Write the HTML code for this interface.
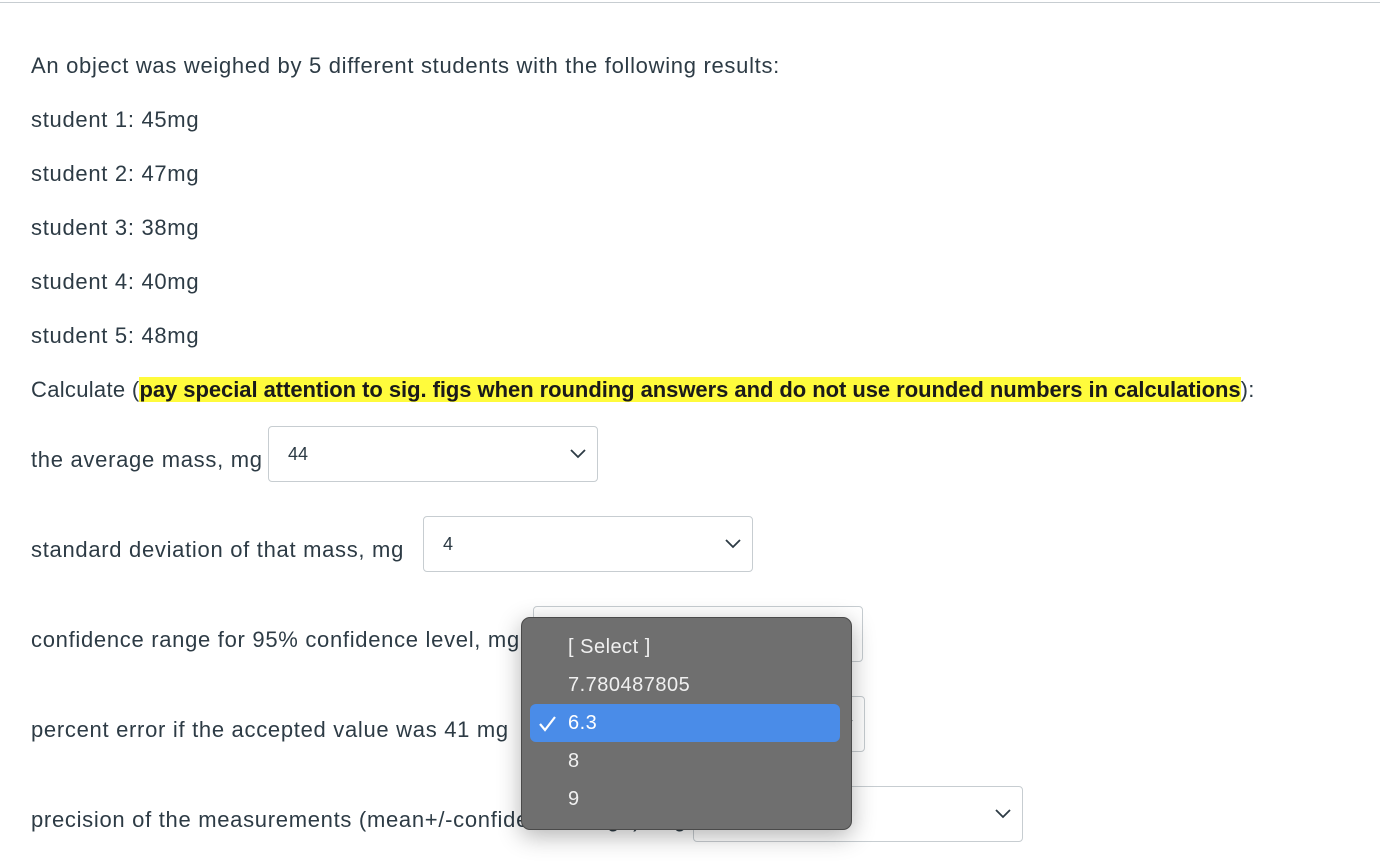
<!DOCTYPE html>
<html><head><style>
body{margin:0;width:1380px;height:868px;overflow:hidden;background:#fff;font-family:"Liberation Sans",sans-serif;color:#2d3b45;position:relative}
.top{position:absolute;left:0;top:2px;width:1380px;height:1px;background:#c7cdd1}
.t{position:absolute;left:31px;font-size:22px;letter-spacing:0.7px;white-space:nowrap;color:#2d3b45}
.hl{background:#fffb3c;font-weight:bold;color:#1a1a1a;letter-spacing:-0.05px}
.sel{position:absolute;width:328px;height:54px;border:1px solid #c7cdd1;border-radius:4px;background:#fff;font-size:18px;color:#2d3b45}
.sel span{position:absolute;left:19px;top:17px}
.sel svg{position:absolute;right:10px;top:21px}
.dd{position:absolute;left:521px;top:617px;width:329px;height:211px;background:#6f6f6f;border:1px solid #4a4a4a;border-radius:9px;box-shadow:0 6px 24px rgba(0,0,0,.3);color:#f0f0f0;font-size:20px;letter-spacing:0.5px}
.dd .it{position:absolute;left:46px}
.hi{position:absolute;left:8px;top:86px;width:310px;height:38px;background:#4a8ce8;border-radius:6px}
</style></head><body>
<div class="top"></div>
<div class="t" style="top:53px">An object was weighed by 5 different students with the following results:</div>
<div class="t" style="top:107px">student 1: 45mg</div>
<div class="t" style="top:161px">student 2: 47mg</div>
<div class="t" style="top:215px">student 3: 38mg</div>
<div class="t" style="top:269px">student 4: 40mg</div>
<div class="t" style="top:323px">student 5: 48mg</div>
<div class="t" style="top:377px;letter-spacing:0.3px">Calculate (<span class="hl">pay special attention to sig. figs when rounding answers and do not use rounded numbers in calculations</span>):</div>
<div class="t" style="top:447px">the average mass, mg</div>
<div class="sel" style="left:268px;top:426px"><span>44</span><svg width="18" height="12"><path d="M2 2l7 7 7-7" fill="none" stroke="#2d3b45" stroke-width="1.8"/></svg></div>
<div class="t" style="top:537px">standard deviation of that mass, mg</div>
<div class="sel" style="left:423px;top:516px"><span>4</span><svg width="18" height="12"><path d="M2 2l7 7 7-7" fill="none" stroke="#2d3b45" stroke-width="1.8"/></svg></div>
<div class="t" style="top:627px">confidence range for 95% confidence level, mg</div>
<div class="sel" style="left:533px;top:606px"><svg width="18" height="12"><path d="M2 2l7 7 7-7" fill="none" stroke="#2d3b45" stroke-width="1.8"/></svg></div>
<div class="t" style="top:717px">percent error if the accepted value was 41 mg</div>
<div class="sel" style="left:535px;top:696px"><svg width="18" height="12"><path d="M2 2l7 7 7-7" fill="none" stroke="#2d3b45" stroke-width="1.8"/></svg></div>
<div class="t" style="top:807px">precision of the measurements (mean+/-confidence range), mg</div>
<div class="sel" style="left:693px;top:786px"><svg width="18" height="12"><path d="M2 2l7 7 7-7" fill="none" stroke="#2d3b45" stroke-width="1.8"/></svg></div>
<div class="dd">
<div class="hi"></div>
<div class="it" style="top:18px">[ Select ]</div>
<div class="it" style="top:56px">7.780487805</div>
<svg style="position:absolute;left:16px;top:97px" width="20" height="18"><path d="M2 9l5 6L17 2" fill="none" stroke="#fff" stroke-width="2.2"/></svg>
<div class="it" style="top:94px;color:#fff">6.3</div>
<div class="it" style="top:132px">8</div>
<div class="it" style="top:170px">9</div>
</div>
</body></html>
